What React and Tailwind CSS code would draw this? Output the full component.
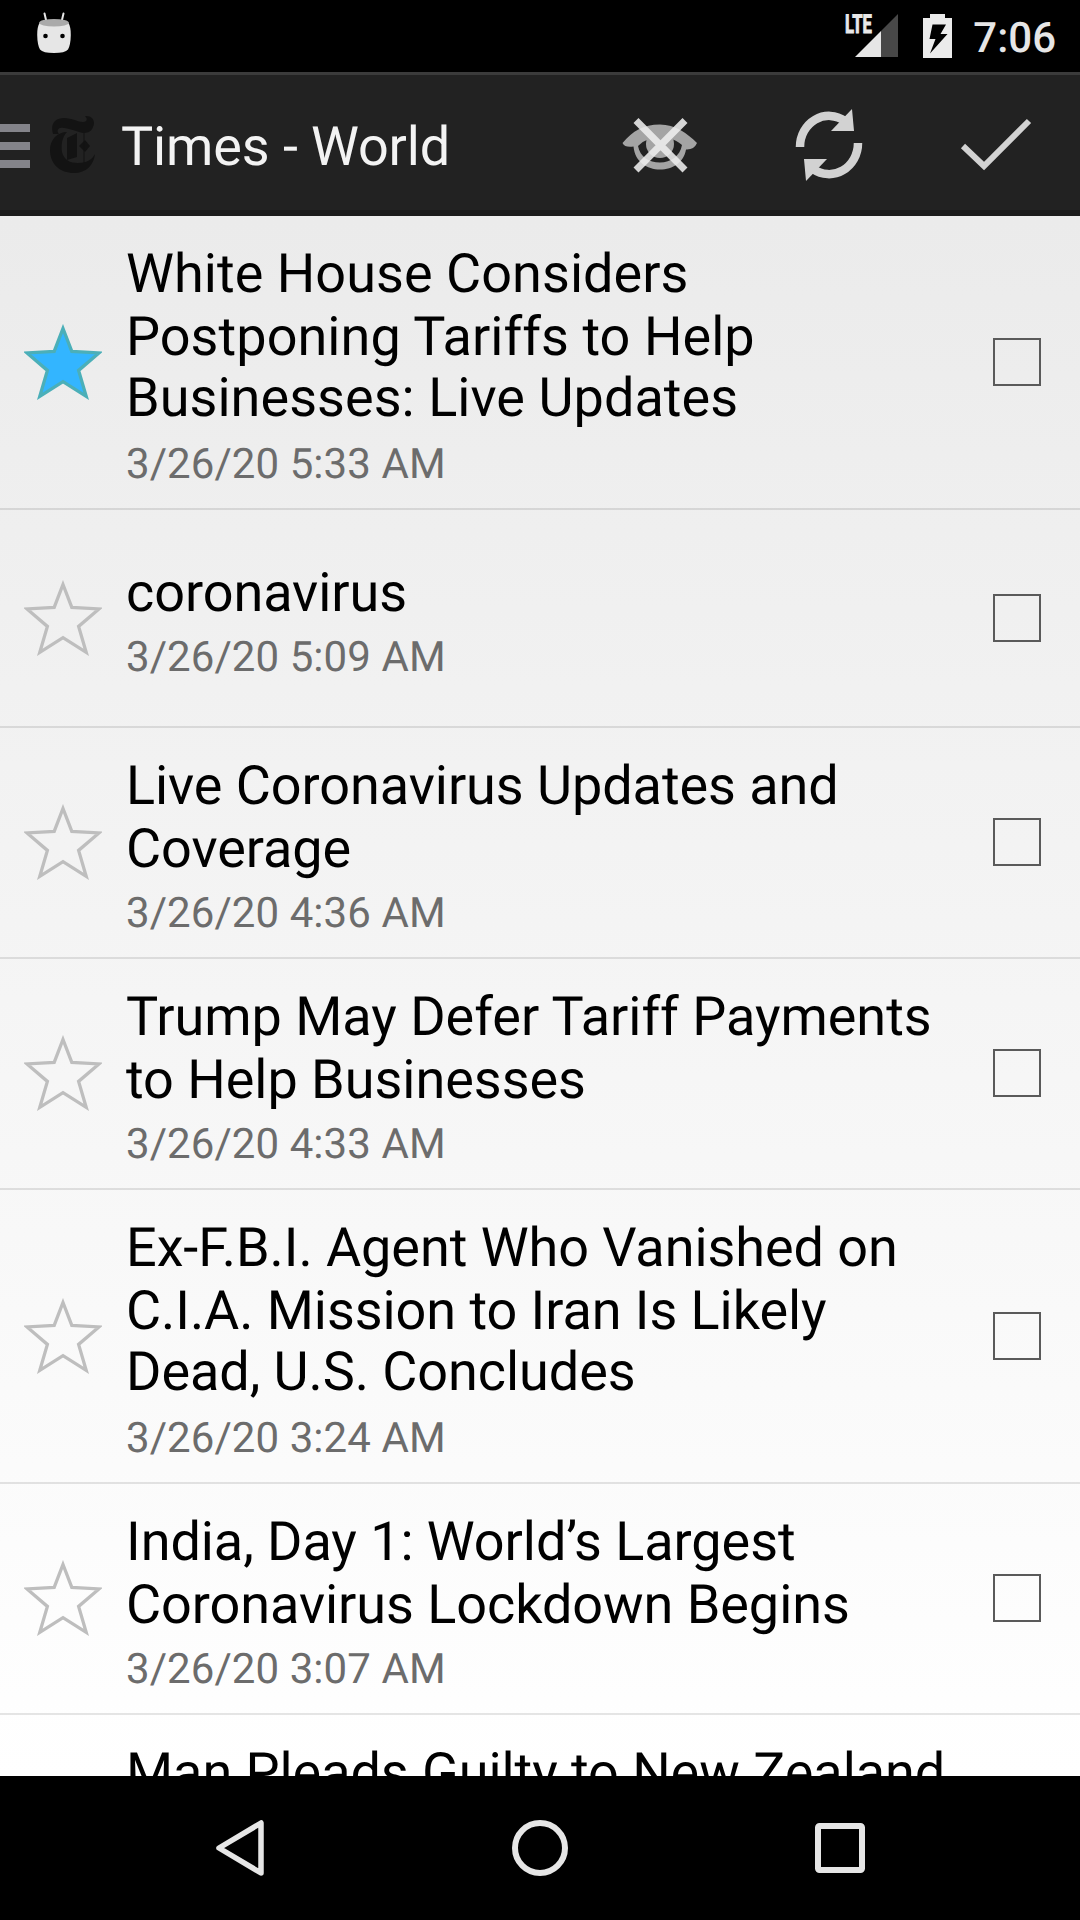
const ARTICLES = [
  { lines: ["White House Considers", "Postponing Tariffs to Help", "Businesses: Live Updates"], date: "3/26/20 5:33 AM", starred: true, size: "h-[294px]", tracking: "tracking-[0.05px]" },
  { lines: ["coronavirus"], date: "3/26/20 5:09 AM", size: "h-[218px]", inset: "pt-[52px]" },
  { lines: ["Live Coronavirus Updates and", "Coverage"], date: "3/26/20 4:36 AM", size: "h-[231px] pb-px" },
  { lines: ["Trump May Defer Tariff Payments", "to Help Businesses"], date: "3/26/20 4:33 AM", size: "h-[231px] pb-px", tracking: "tracking-[-0.03px]" },
  { lines: ["Ex-F.B.I. Agent Who Vanished on", "C.I.A. Mission to Iran Is Likely", "Dead, U.S. Concludes"], date: "3/26/20 3:24 AM", size: "h-[294px]" },
  { lines: ["India, Day 1: World’s Largest", "Coronavirus Lockdown Begins"], date: "3/26/20 3:07 AM", size: "h-[231px] pb-px" },
  { lines: ["Man Pleads Guilty to New Zealand"], size: "h-[231px] pb-px" },
];

function Star({ filled }) {
  return (
    <svg className="ml-6 mr-6 h-[76px] w-[78px] shrink-0" viewBox="0 0 78 76" fill="none">
      <path
        d="M39 4.5 L47.8 27.3 L75 28.9 L54.6 46.4 L62.2 72.3 L39 57.6 L15.8 72.3 L23.4 46.4 L3 28.9 L30.2 27.3 Z"
        fill={filled ? "#33b5ff" : "none"}
        stroke={filled ? "#4bafb8" : "#bebebe"}
        strokeWidth="3.3"
      />
    </svg>
  );
}

function Article({ lines, date, starred, size, inset = "pt-[27px]", tracking = "tracking-[-0.06px]" }) {
  return (
    <li className={`flex shrink-0 items-center border-b-2 border-black/10 ${size}`}>
      <Star filled={starred} />
      <div className={`h-full min-w-0 flex-1 whitespace-nowrap ${inset}`}>
        <h2 className={`text-[54px] leading-[63px] text-black ${tracking}`}>
          {lines.map((l) => (
            <span key={l} className="block nth-3:-mt-0.5 nth-3:pb-0.5">{l}</span>
          ))}
        </h2>
        {date && <p className="mt-2 text-[42px] leading-[49px] tracking-[0.07px] text-[#6c6c6c]">{date}</p>}
      </div>
      <span className="mr-[39px] size-12 shrink-0 border-2 border-[#5a5a5a]" />
    </li>
  );
}

function StatusBar() {
  return (
    <div className="flex h-[72px] shrink-0 items-start bg-black">
      <svg className="ml-9 mt-3 h-[42px] w-9" viewBox="0 0 36 42">
        <path d="M8.5 1.5 L10.5 10 M27.5 1.5 L25.5 10" stroke="#e6e6e6" strokeWidth="2" strokeLinecap="round" />
        <path d="M4 10 Q18 16 32 10 Q35 15 34.8 23 Q34.6 33 32 37.5 Q29 41 18 41 Q7 41 4 37.5 Q1.4 33 1.2 23 Q1 15 4 10Z" fill="#e6e6e6" />
        <ellipse cx="18" cy="10.7" rx="14.8" ry="3.8" fill="#aaaaaa" />
        <circle cx="9.5" cy="24" r="2.3" fill="#000" />
        <circle cx="26.5" cy="24" r="2.3" fill="#000" />
      </svg>
      <div className="relative ml-auto mr-[25px] mt-[14px] h-[44px] w-[53px]">
        <span className="absolute left-0 top-px origin-left scale-x-[0.64] text-[26px] leading-[21px] font-bold text-[#e8e8e8] [-webkit-text-stroke:1px_#e8e8e8]">LTE</span>
        <svg className="absolute left-[10px] top-0 h-[43px] w-[43px]" viewBox="0 0 43 43">
          <path d="M43 0V43H26V17Z" fill="#484848" />
          <path d="M26 17V43H0Z" fill="#e6e6e6" />
        </svg>
      </div>
      <svg className="mr-[21px] mt-[14px] h-11 w-[29px]" viewBox="0 0 29 44">
        <path d="M0 4H7V0H22V4H29V44H0Z" fill="#ebebeb" />
        <path d="M9.5 10.5H23L17.5 20H24.5L7 39.5L12.5 25H6.5Z" fill="#000" />
      </svg>
      <span className="mr-[24px] mt-[15px] text-[42px] leading-[48px] font-medium text-[#e6e6e6]">7:06</span>
    </div>
  );
}

function TimesLogo() {
  return (
    <svg className="ml-5 mt-0.5 h-[58px] w-[45px]" viewBox="0 0 45 58" fill="#131313">
      <path d="M3 19 C0 9 5 3 14 3 C22 3 28 7 33 7 C37 7 38 4 35 1 C42 0 46 6 43 12 C41 18 35 19 29 17 C22 15 15 12 10 13 C7 14 7 17 9 19Z" />
      <path d="M17 17 C12 22 11 30 12 37 C14 45 20 48 28 48 C36 48 42 45 45 39 C44 50 36 58 24 58 C10 58 0 49 0 35 C0 25 7 17 17 17Z" />
      <path d="M17 23 L27 18 V42 L17 45Z" />
      <path d="M35 25 L40 31 L35 37 L29 31Z" />
      <path d="M34 18V48" stroke="#131313" strokeWidth="1" />
    </svg>
  );
}

function ActionBar() {
  return (
    <header className="flex h-36 shrink-0 items-center border-t-[3px] border-b-[6px] border-t-[#3b3b3b] border-b-[#1a1a1a] bg-[#222222]">
      <div className="mt-[7px] flex w-[30px] flex-col gap-[10px]">
        <span className="h-2 bg-[#84848a]" />
        <span className="h-2 bg-[#84848a]" />
        <span className="h-2 bg-[#84848a]" />
      </div>
      <TimesLogo />
      <h1 className="ml-[26px] mt-2.5 text-[54px] leading-[64px] tracking-[-0.12px] text-[#f3f3f3]">Times - World</h1>
      <svg className="ml-auto mr-24 h-[76px] w-[78px]" viewBox="0 0 78 76">
        <path fillRule="evenodd" d="M1.5 38 C12 26 22 19.5 39 19.5 C54 19.5 66 28 76 38 Q73 45 65 44.5 C63 57 52 64.5 39 64.5 C26 64.5 14 57 12.5 41.5 Q4 43 1.5 38Z M17 41 C19 52 28 57.5 39 57.5 C50 57.5 59 51 61 40 Q55 35 50 34 Q39 31 28 34 Q22 36 17 41Z" fill="#a4a4a4" />
        <circle cx="39" cy="39" r="14" fill="#a4a4a4" />
        <path d="M15 15.5 L64 65 M64 15.5 L15 65" stroke="#eeeeee" strokeOpacity=".88" strokeWidth="7" />
      </svg>
      <svg className="mr-24 mt-1 h-[76px] w-[68px]" viewBox="0 0 68 76">
        <path d="M5 40 A29 31 0 0 1 50 14" fill="none" stroke="#d2d2d2" strokeWidth="8.5" />
        <path d="M57 2 L59 24 L36 24Z" fill="#d2d2d2" />
        <path d="M63 36 A29 31 0 0 1 18 62" fill="none" stroke="#d2d2d2" strokeWidth="8.5" />
        <path d="M11 74 L9 52 L32 52Z" fill="#d2d2d2" />
      </svg>
      <svg className="mr-[47px] h-[60px] w-[74px]" viewBox="0 0 74 60">
        <path d="M4 33 L25 53 L70 8" fill="none" stroke="#d2d2d2" strokeWidth="6" />
      </svg>
    </header>
  );
}

function NavBar() {
  return (
    <nav className="flex h-36 shrink-0 items-center justify-center gap-[244px] bg-black">
      <svg className="h-[60px] w-[56px]" viewBox="0 0 56 60" fill="none" stroke="#e6e6e6" strokeWidth="5.5" strokeLinejoin="round">
        <path d="M49 5 V55 L7 30Z" />
      </svg>
      <svg className="size-[56px]" viewBox="0 0 56 56" fill="none" stroke="#e6e6e6" strokeWidth="6">
        <circle cx="28" cy="28" r="25" />
      </svg>
      <svg className="size-[56px]" viewBox="0 0 56 56" fill="none" stroke="#e6e6e6" strokeWidth="6">
        <rect x="6" y="6" width="44" height="44" rx="1.5" />
      </svg>
    </nav>
  );
}

export default function App() {
  return (
    <div className="flex h-[1920px] w-[1080px] flex-col overflow-hidden bg-black font-[Roboto,sans-serif] [text-rendering:geometricPrecision]">
      <StatusBar />
      <ActionBar />
      <ul className="flex min-h-0 flex-1 flex-col overflow-hidden bg-linear-to-b from-[#ebebeb] to-white">
        {ARTICLES.map((a) => (
          <Article key={a.lines[0]} {...a} />
        ))}
      </ul>
      <NavBar />
    </div>
  );
}
